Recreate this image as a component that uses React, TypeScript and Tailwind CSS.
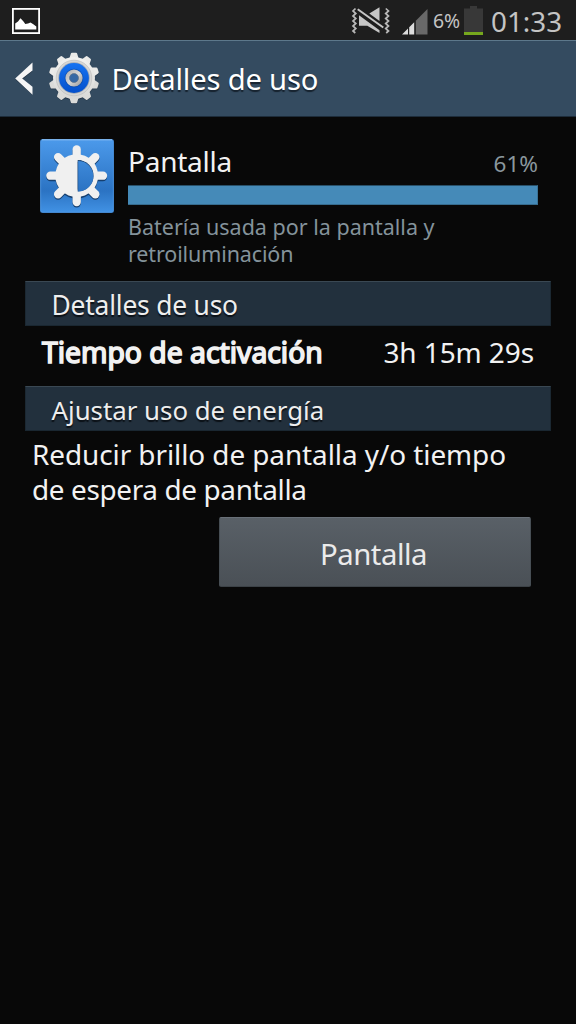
import type { ReactNode } from "react";

const TEETH = [0, 36, 72, 108, 144, 180, 216, 252, 288, 324];
const RAYS = [0, 45, 90, 135, 180, 225, 270, 315];

function PictureIcon() {
  return (
    <svg width="28" height="26" viewBox="0 0 28 26" className="block">
      <rect x="0.9" y="0.9" width="26.2" height="24.2" fill="none" stroke="#fff" strokeWidth="1.8" />
      <path d="M3.2 21.5V15.500l2.800-2 2.500-3.200 3 3.200 1.800 2.500 2.700-0.500 2.500-1 2.800 1.700 3 2.300v3z" fill="#fff" />
    </svg>
  );
}

function MuteVibrateIcon() {
  return (
    <svg width="39" height="28" viewBox="0 0 39 28" className="block" fill="none">
      <path d="M18.300 6.500L28.500 0.300V13.900z" fill="#c6c6c6" />
      <path d="M6.700 2.300L32.300 20.500" stroke="#c6c6c6" strokeWidth="2" />
      <path d="M8 8.300V18.700h8.300L28.500 26V23.300z" fill="#c6c6c6" />
      <path d="M4.500 1.500L2 4l2.800 2.500L2 9l2.800 2.500L2 14l2.800 2.500L2 19l2.800 2.500L2 24l2.300 2" stroke="#b8b8b8" strokeWidth="1.700" />
      <path d="M34.800 1.500L37.500 4l-2.800 2.500L37.500 9l-2.800 2.500L37.500 14l-2.800 2.500L37.500 19l-2.800 2.500L37.500 24l-2.300 2" stroke="#b8b8b8" strokeWidth="1.700" />
    </svg>
  );
}

function SignalIcon() {
  return (
    <svg width="26" height="26" viewBox="0 0 26 26" className="block">
      <path d="M0 25.500L6 19.500v6z" fill="#ddd" />
      <path d="M7.200 18.300l5-5v12.200h-5z" fill="#ddd" />
      <path d="M13.800 11.700L25.500 0v25.500H13.800z" fill="#696969" />
    </svg>
  );
}

function BatteryIcon() {
  return (
    <svg width="19" height="29" viewBox="0 0 19 29" className="block">
      <path d="M0 2.500h6V0h7v2.500h6V29H0z" fill="#383838" />
      <rect x="0" y="26" width="19" height="3" fill="#76a81d" />
    </svg>
  );
}

function GearIcon() {
  const tooth = "M-4.800 -19L-3.200 -24.300Q-3 -25.300 -2 -25.300H2Q3 -25.300 3.200 -24.300L4.800 -19z";
  return (
    <svg width="52" height="52" viewBox="-26 -26 52 52" className="block">
      <defs>
        <linearGradient id="metal" x1="0" y1="0" x2="0" y2="1">
          <stop offset="0" stopColor="#f2f2f0" />
          <stop offset="1" stopColor="#d8d8d6" />
        </linearGradient>
        <linearGradient id="blue" x1="0" y1="0" x2="0" y2="1">
          <stop offset="0" stopColor="#1673f2" />
          <stop offset="1" stopColor="#0450cc" />
        </linearGradient>
        <linearGradient id="hub" x1="0" y1="0" x2="1" y2="1">
          <stop offset="0" stopColor="#b4b4b4" />
          <stop offset="0.5" stopColor="#d6d6d6" />
          <stop offset="1" stopColor="#a4a4a4" />
        </linearGradient>
      </defs>
      <g fill="#1d2b39" opacity="0.5" transform="translate(0 0.700)">
        <circle r="21.300" />
        {TEETH.map((a) => (
          <path key={a} d={tooth} transform={`rotate(${a})`} />
        ))}
      </g>
      {TEETH.map((a) => (
        <path key={a} d={tooth} fill={a > 90 && a < 270 ? "#dbdbd9" : "#ebebe9"} transform={`rotate(${a})`} />
      ))}
      <circle r="21" fill="url(#metal)" />
      <circle r="17.800" fill="#d6d6d5" stroke="#c0c0bf" strokeWidth="0.700" />
      <circle r="15.700" fill="#9fa9b5" />
      <circle r="14.900" fill="url(#blue)" />
      <circle r="9.300" fill="#0a4396" opacity="0.600" />
      <circle r="6.600" fill="#3b6da6" stroke="url(#hub)" strokeWidth="4" />
      <circle r="4.500" fill="#3568a5" stroke="#7d7d7d" strokeWidth="0.500" />
    </svg>
  );
}

function BrightnessIcon() {
  const sun = (
    <>
      {RAYS.map((a) => (
        <path key={a} d="M0 -18V-26.300" strokeWidth="8.300" strokeLinecap="round" transform={`rotate(${a})`} />
      ))}
      <circle r="18.600" strokeWidth="5.600" fill="none" />
      <path d="M0.500 -18A18 18 0 0 0 0.500 18z" strokeWidth="1" />
    </>
  );
  return (
    <svg width="74" height="74" viewBox="-37 -37 74 74" className="block">
      <defs>
        <linearGradient id="tile" gradientUnits="userSpaceOnUse" x1="0" y1="-37" x2="0" y2="37">
          <stop offset="0" stopColor="#4c9aeb" />
          <stop offset="0.700" stopColor="#2b73c3" />
          <stop offset="1" stopColor="#4293e5" />
        </linearGradient>
      </defs>
      <rect x="-37" y="-37" width="74" height="74" rx="2.500" fill="#2b619d" />
      <rect x="-36.300" y="-36.300" width="72.600" height="72.600" rx="2" fill="url(#tile)" stroke="#5aa5f0" strokeWidth="0.600" />
      <path d="M-35 -36.200H35" stroke="#8fc3f6" strokeWidth="1" />
      <g transform="translate(-0.300 1)" stroke="#163f6e" fill="#163f6e">{sun}</g>
      <g transform="translate(-0.300 -0.300)" stroke="#f0f0f0" fill="#f0f0f0">{sun}</g>
      <path d="M0.700 -16.100A15.800 15.800 0 0 1 0.700 15.500z" fill="#173f6d" />
      <path d="M1.200 -14.900A15 15 0 0 1 1.200 15.500z" fill="url(#tile)" />
    </svg>
  );
}

function SectionBar({ children, className }: { children: ReactNode; className: string }) {
  return (
    <div className={`ml-[25px] h-[45px] w-[526px] border border-t-[#3a4853] border-x-[#1b2832] border-b-[#1a2731] bg-[#22303d] pl-[25.5px] leading-[47px] whitespace-nowrap text-[#eee] [text-shadow:0_2px_1px_#0b1016] ${className}`}>
      {children}
    </div>
  );
}

export default function App() {
  return (
    <div className="flex h-[1024px] w-[576px] flex-col overflow-hidden bg-[#080808] font-['Noto_Sans',sans-serif] text-[#f2f2f2]">
      <div className="flex h-10 shrink-0 bg-[#1e1e1e] text-[#c4c4c4]">
        <div className="ml-[12px] pt-[8px]"><PictureIcon /></div>
        <div className="ml-auto flex pr-[14px]">
          <div className="mr-[12px] w-[39px] pt-[7px]"><MuteVibrateIcon /></div>
          <div className="w-[26px] pt-[9px]"><SignalIcon /></div>
          <div className="w-[36px] pl-[5px] text-[19.4px] leading-[42px] whitespace-nowrap">6%</div>
          <div className="w-[19px] pt-[6px]"><BatteryIcon /></div>
          <div className="ml-[8px] w-[71px] text-[27.8px] leading-[42px] whitespace-nowrap">01:33</div>
        </div>
      </div>

      <header className="flex h-[77px] shrink-0 border-t border-b border-t-[#5d788b] border-b-[#1d2c3a] bg-[#344b60]">
        <svg width="18" height="34" viewBox="0 0 18 34" className="mt-[21px] ml-[15px] block">
          <path d="M17 2.500v7L7 17.500l10 8v7L0.500 17.500z" fill="#1e2d3b" />
          <path d="M17.500 0.500v8L7.200 16.500 17.500 24.800v8L0.200 16.500z" fill="#f6f6f6" />
        </svg>
        <div className="mt-[11px] ml-[14.5px]"><GearIcon /></div>
        <h1 className="ml-[12px] text-[29.2px] leading-[77px] tracking-[-0.18px] whitespace-nowrap text-white [text-shadow:0_2px_1px_#16222e]">Detalles de uso</h1>
      </header>

      <section className="flex h-[164px] shrink-0 pt-[22px] pl-[40px]">
        <BrightnessIcon />
        <div className="ml-[14px] w-[410px]">
          <div className="flex h-[46px] items-baseline justify-between whitespace-nowrap">
            <span className="text-[28px] leading-[44px] tracking-[-0.25px]">Pantalla</span>
            <span className="text-[22.5px] leading-[44px] text-[#8a979d]">61%</span>
          </div>
          <div className="h-5 border border-l-0 border-t-[#285069] border-r-[#3b7396] border-b-[#376c8e] bg-[#458ab8]" />
          <p className="mt-[9px] text-[21.5px] leading-[26.5px] text-[#84939b]">
            Batería usada por la pantalla y<br />
            <span className="tracking-[-0.12px]">retroiluminación</span>
          </p>
        </div>
      </section>

      <SectionBar className="text-[26.4px] tracking-[-0.2px]">Detalles de uso</SectionBar>
      <div className="flex h-[60px] shrink-0 justify-between pr-[42px] pl-[42px] text-[28px] leading-[52px] whitespace-nowrap">
        <span className="text-[28.3px] [-webkit-text-stroke:1.6px_#f2f2f2]">Tiempo de activación</span>
        <span className="tracking-[-0.1px]">3h 15m 29s</span>
      </div>
      <SectionBar className="text-[25.8px]">Ajustar uso de energía</SectionBar>

      <p className="mt-[6px] ml-[32px] text-[27.9px] leading-[35px] whitespace-nowrap">
        <span className="tracking-[-0.06px]">Reducir brillo de pantalla y/o tiempo</span><br />
        <span className="tracking-[-0.35px]">de espera de pantalla</span>
      </p>
      <button className="mt-[10px] ml-[219px] h-[70px] w-[312px] shrink-0 rounded-[2px] border border-t-[#697078] border-x-[#474e54] border-b-[#3c4247] bg-linear-to-b from-[#596067] to-[#4a5056] pt-[2px] pr-[3px] text-[29.3px] leading-[68px] tracking-[-0.45px] text-[#ebebeb]">
        Pantalla
      </button>
    </div>
  );
}
